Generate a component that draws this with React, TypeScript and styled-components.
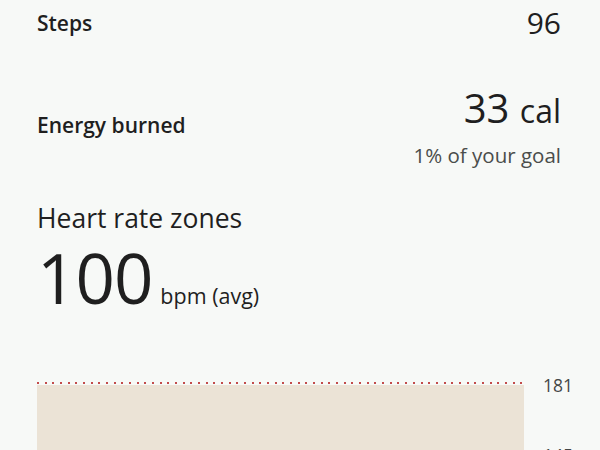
import React from "react";
import styled, { createGlobalStyle } from "styled-components";

const Global = createGlobalStyle`
  html, body { margin: 0; padding: 0; background: #f7f9f7; }
  body { font-family: "Open Sans", "Roboto", sans-serif; color: #1f1f1f; overflow: hidden; }
`;

const Page = styled.div`
  width: 600px;
  height: 450px;
  box-sizing: border-box;
  padding: 0 39px 0 37px;
  background: #f7f9f7;
  overflow: hidden;
`;

const Row = styled.div<{ $top: number; $align: string }>`
  display: flex;
  justify-content: space-between;
  align-items: ${(p) => p.$align};
  margin-top: ${(p) => p.$top}px;
`;

const Label = styled.div<{ $offset?: number }>`
  font-size: 21px;
  line-height: 28px;
  font-weight: 600;
  color: #1f1f1f;
  margin-top: ${(p) => p.$offset ?? 0}px;
`;

const RightCol = styled.div`
  display: flex;
  flex-direction: column;
  align-items: flex-end;
`;

const Value = styled.div<{ $size: number }>`
  font-size: ${(p) => p.$size}px;
  line-height: 1.1;
  font-weight: 400;
  color: #1f1f1f;
`;

const Unit = styled.span`
  font-size: 0.8em;
`;

const Sub = styled.div`
  font-size: 20.5px;
  line-height: 26px;
  color: #4a4d4b;
  margin-top: 12px;
`;

const Section = styled.div`
  margin-top: 33px;
`;

const Title = styled.div`
  font-size: 26.5px;
  line-height: 34px;
  color: #1f1f1f;
`;

const Big = styled.div`
  display: flex;
  align-items: baseline;
  gap: 8px;
  margin-top: 2px;
`;

const BigNum = styled.span`
  font-size: 69px;
  line-height: 80px;
  letter-spacing: -1px;
  color: #1f1f1f;
`;

const BigUnit = styled.span`
  font-size: 21.5px;
  color: #1f1f1f;
`;

const Chart = styled.div`
  display: grid;
  grid-template-columns: 487px 1fr;
  column-gap: 19px;
  margin-top: 65px;
`;

const Plot = styled.div`
  display: flex;
  flex-direction: column;
`;

const Dots = styled.div`
  height: 2px;
  margin-bottom: 1px;
  background: repeating-linear-gradient(
    to right,
    #c24b4b 0 2px,
    transparent 2px 7.67px
  );
`;

const Fill = styled.div`
  height: 80px;
  background: #ebe3d6;
`;

const Axis = styled.div`
  display: flex;
  flex-direction: column;
  gap: 50px;
  margin-top: -7px;
`;

const Tick = styled.div`
  font-size: 17.5px;
  line-height: 20px;
  color: #444746;
`;

export default function App() {
  return (
    <Page>
      <Global />
      <Row $top={6} $align="center">
        <Label>Steps</Label>
        <Value $size={30}>96</Value>
      </Row>
      <Row $top={47} $align="flex-start">
        <Label $offset={25}>Energy burned</Label>
        <RightCol>
          <Value $size={40}>
            33 <Unit>cal</Unit>
          </Value>
          <Sub>1% of your goal</Sub>
        </RightCol>
      </Row>
      <Section>
        <Title>Heart rate zones</Title>
        <Big>
          <BigNum>100</BigNum>
          <BigUnit>bpm (avg)</BigUnit>
        </Big>
      </Section>
      <Chart>
        <Plot>
          <Dots />
          <Fill />
        </Plot>
        <Axis>
          <Tick>181</Tick>
          <Tick>145</Tick>
        </Axis>
      </Chart>
    </Page>
  );
}
